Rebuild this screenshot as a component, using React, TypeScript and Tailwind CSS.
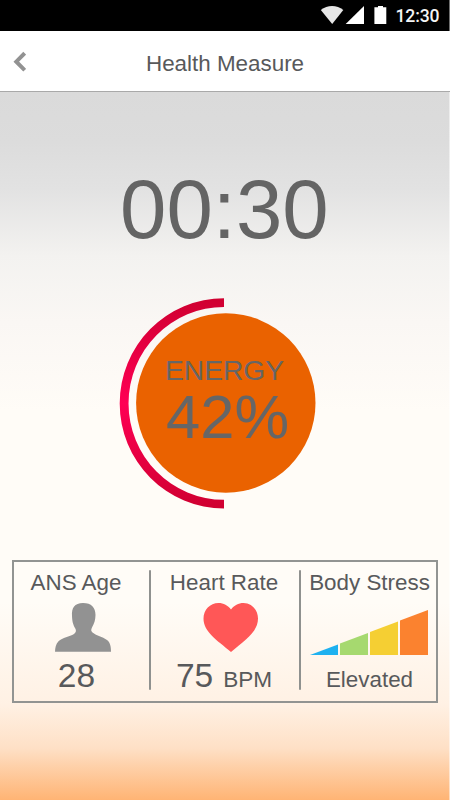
import type { ReactNode } from 'react'

/**
 * Health measure screen: timer, energy dial and the three result cards.
 */

interface ReadingProps {
  title: string
  icon: ReactNode
  className?: string
  children: ReactNode
}

const STRESS_BARS = [
  { points: '0,45 28,34.5 28,45',         fill: '#1eb1f0' },
  { points: '30,33.6 58,23 58,45 30,45',  fill: '#a6d96f' },
  { points: '60,22 88,11.5 88,45 60,45',  fill: '#f5cf33' },
  { points: '90,10.5 118,0 118,45 90,45', fill: '#fb822f' },
]

function StatusBar() {
  return (
    <div className="h-[31px] bg-black flex border-r border-[#6f6f6f]">
      <svg width="129" height="31" viewBox="320 0 129 31" className="ml-auto">
        <path d="M320.800 10C327.500 4.600 336.800 4.600 343.300 10L332.200 23.900Z" fill="#e6e6e6" />
        <path d="M364 6V24H345.700Z" fill="#fff" />
        <path d="M378 6H383V7.300H386.300V24H374.400V7.300H378Z" fill="#fff" />
        <text x="395.500" y="21.700" fontSize="17.600" fontWeight="500" fill="#f4f4f4" fontFamily="Roboto, sans-serif" textLength="44">12:30</text>
      </svg>
    </div>
  )
}

function Header() {
  return (
    <header className="h-[61px] bg-white border-b border-[#a9a9a9] flex items-center">
      <button aria-label="Back" className="ml-[12px] mt-px">
        <svg width="14" height="22" viewBox="0 0 14 22" fill="none" stroke="#929292" strokeWidth="4">
          <path d="M12.700 2.200L4.300 10.700L12.700 19.200" />
        </svg>
      </button>
      <h1 className="ml-[120px] mt-[6px] text-[22.4px] leading-[26px] whitespace-nowrap">Health Measure</h1>
    </header>
  )
}

function EnergyDial() {
  return (
    <div className="mt-[43px] ml-[119px] w-[212px] h-[212px] grid">
      <svg width="212" height="212" viewBox="0 0 212 212" className="col-start-1 row-start-1">
        <defs>
          <linearGradient id="arc" x1="0" y1="0" x2="0" y2="1">
            <stop offset="0" stopColor="#cf0030" />
            <stop offset="0.500" stopColor="#ff0054" />
            <stop offset="1" stopColor="#cf0030" />
          </linearGradient>
        </defs>
        <path d="M105 0.200A104.300 105.200 0 0 0 105 210.600V201.800A95.500 96.400 0 0 1 105 9Z" fill="url(#arc)" />
        <circle cx="106.800" cy="105" r="89.700" fill="#ea6200" />
      </svg>
      <div className="col-start-1 row-start-1 pt-[56px] pl-[46px] text-[#666666]">
        <div className="text-[28.200px] leading-[32px]">ENERGY</div>
        <div className="mt-px text-[61.500px] leading-[60px] ml-px">42%</div>
      </div>
    </div>
  )
}

function Reading({ title, icon, className = '', children }: ReadingProps) {
  return (
    <section className={`flex flex-col items-center ${className}`}>
      <h2 className="mt-[8px] text-[22.400px] leading-[26px] whitespace-nowrap">{title}</h2>
      {icon}
      <div className="mt-[5px] flex items-baseline leading-[38px] whitespace-nowrap">{children}</div>
    </section>
  )
}

function Divider() {
  return <div className="mt-[8px] h-[120px] w-[2px] rounded bg-[#8f918f]" />
}

export default function App() {
  return (
    <div className="w-[450px] h-[800px] overflow-hidden flex flex-col font-['Liberation_Sans',Arial,sans-serif] text-[#58595b]">
      <StatusBar />
      <Header />
      <main className="flex-1 border-r border-white/50 bg-[linear-gradient(#dadada_0px,#dcdcdc_50px,#e2e2e2_97px,#f3f2f0_164px,#faf7f4_230px,#fffcf7_320px,#fffcf7_510px,#fff1e4_612px,#fee0c6_656px,#ffb474_708px)]">
        <div className="pt-[72px] pl-[120px] text-[83.400px] leading-[91px] text-[#646464]">00:30</div>
        <EnergyDial />
        <div className="mt-[50px] ml-[12px] w-[426px] h-[143px] border-2 border-[#929492] grid grid-cols-[135px_2px_148px_2px_135px]">
          <Reading
            title="ANS Age"
            className="pr-[11px]"
            icon={
              <svg width="56" height="49" viewBox="0 0 56 49" className="mt-[7px] ml-[14px]">
                <path d="M28 0C19.500 0 16.500 5 17 13C17.200 19 18.300 22 20.300 25.500C21.500 27.500 21 29.500 19 31C14.500 34 7.500 34.500 3.500 38.200C0.800 41 0.200 44.500 0 48.700H56C56 44.500 55.500 39.500 52 37C47 33.500 42 33 37.500 29.500C35.800 28 36 26.500 37 24.500C39.500 20 40.300 17 40.500 12C40.500 4.500 36.500 0 28 0Z" fill="#929292" />
              </svg>
            }
          >
            <span className="text-[33.500px] ml-px">28</span>
          </Reading>
          <Divider />
          <Reading
            title="Heart Rate"
            className="pr-[2px]"
            icon={
              <svg width="56" height="49" viewBox="0 0 56 49" className="mt-[7px] ml-[14px]">
                <path d="M28 6.500C25 2.500 20.500 0 15.500 0C7 0 0.500 7 0.500 15.500C0.500 29 14 37 28 49C42 37 55 29 55 15.500C55 7 48.500 0 40.500 0C35.500 0 31 2.500 28 6.500Z" fill="#ff5757" />
              </svg>
            }
          >
            <span className="text-[33.500px]">75</span>
            <span className="ml-[10px] text-[22.600px]">BPM</span>
          </Reading>
          <Divider />
          <Reading
            title="Body Stress"
            className="pl-[2px]"
            icon={
              <svg width="118" height="45" viewBox="0 0 118 45" className="mt-[14px] mr-[2px]">
                {STRESS_BARS.map(b => (
                  <polygon key={b.fill} points={b.points} fill={b.fill} />
                ))}
              </svg>
            }
          >
            <span className="text-[22.400px] mt-px">Elevated</span>
          </Reading>
        </div>
      </main>
    </div>
  )
}
